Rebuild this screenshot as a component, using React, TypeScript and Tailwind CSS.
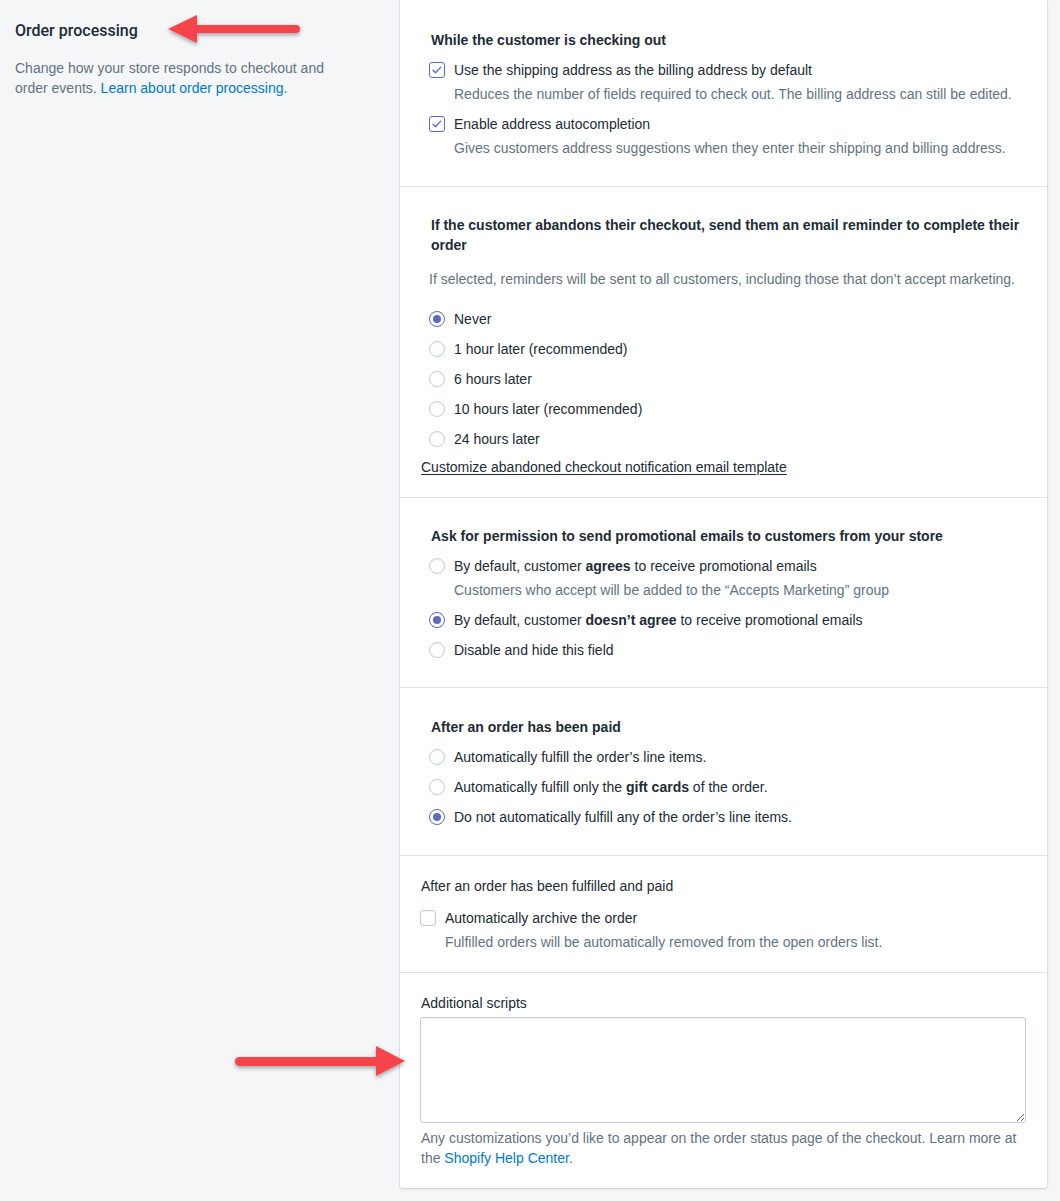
import React from 'react';

const font = { fontFamily: '"Liberation Sans", Arial, sans-serif' };

function Checkbox({ checked }: { checked?: boolean }) {
  return (
    <span
      className={`flex h-4 w-4 shrink-0 items-center justify-center rounded-[3px] border bg-white ${
        checked ? 'border-[#5c6ac4]' : 'border-[#c4cdd5] shadow-[inset_0_1px_2px_rgba(0,0,0,0.06)]'
      }`}
    >
      {checked && (
        <svg viewBox="0 0 16 16" className="h-3.5 w-3.5">
          <path d="M3.5 8.2l2.8 2.9 6-6.4" stroke="#5c6ac4" strokeWidth="1.5" fill="none" strokeLinecap="round" strokeLinejoin="round" />
        </svg>
      )}
    </span>
  );
}

function Radio({ checked }: { checked?: boolean }) {
  return (
    <span
      className={`flex h-4 w-4 shrink-0 items-center justify-center rounded-full border bg-white ${
        checked ? 'border-[#5c6ac4]' : 'border-[#c4cdd5] shadow-[inset_0_1px_2px_rgba(0,0,0,0.06)]'
      }`}
    >
      {checked && <span className="h-2 w-2 rounded-full bg-[#5c6ac4]" />}
    </span>
  );
}

interface OptionProps {
  control: React.ReactNode;
  children: React.ReactNode;
  help?: string;
}

const Option: React.FC<OptionProps> = ({ control, children, help }) => {
  return (
    <div>
      <label className="flex h-5 items-center gap-[9px] text-[#212b36]">
        {control}
        <span>{children}</span>
      </label>
      {help && <p className="mt-1 pl-[25px] leading-5 text-[#637381]">{help}</p>}
    </div>
  );
};

function Arrow({ left }: { left?: boolean }) {
  return (
    <svg width="180" height="40" viewBox="0 0 180 40">
      <defs>
        <filter id={left ? 'shl' : 'shr'} x="-10%" y="-40%" width="120%" height="180%">
          <feDropShadow dx="0" dy="2" stdDeviation="2" floodColor="#000" floodOpacity="0.35" />
        </filter>
      </defs>
      {left ? (
        <g filter="url(#shl)" fill="#f5444b">
          <path d="M4 18 L33 4 L33 32 Z" />
          <rect x="30" y="14" width="106" height="8" rx="4" />
        </g>
      ) : (
        <g filter="url(#shr)" fill="#f5444b">
          <rect x="4" y="14" width="148" height="9" rx="4.5" />
          <path d="M174 18 L145 3 L145 33 Z" />
        </g>
      )}
    </svg>
  );
}

export default function App() {
  const reminders = [
    { label: '1 hour later (recommended)' },
    { label: '6 hours later' },
    { label: '10 hours later (recommended)' },
    { label: '24 hours later' },
  ];

  return (
    <div className="relative min-h-[1201px] w-[1060px] bg-[#f4f6f8] text-[14px] leading-5" style={font}>
      <div className="flex">
        <div className="w-[400px] shrink-0 pl-[15px] pt-[21px]">
          <h2 className="font-['Roboto',sans-serif] text-[16px] font-medium leading-5 text-[#212b36]">Order processing</h2>
          <p className="mt-[17px] w-[318px] text-[#637381]">
            Change how your store responds to checkout and order events.{' '}
            <a className="text-[#007ace]">Learn about order processing</a>.
          </p>
        </div>

        <div className="mb-[14px] w-[647px] rounded-b-[3px] bg-white shadow-[0_0_0_1px_rgba(63,63,68,0.07),0_1px_3px_0_rgba(63,63,68,0.15)]">
          {/* checking out */}
          <section className="border-b border-[#dfe3e8] pb-[28px] pl-[29px] pr-5 pt-[30px]">
            <h3 className="pl-[2px] font-bold text-[#212b36]">While the customer is checking out</h3>
            <div className="mt-[10px] space-y-[10px]">
              <Option
                control={<Checkbox checked />}
                help="Reduces the number of fields required to check out. The billing address can still be edited."
              >
                Use the shipping address as the billing address by default
              </Option>
              <Option
                control={<Checkbox checked />}
                help="Gives customers address suggestions when they enter their shipping and billing address."
              >
                Enable address autocompletion
              </Option>
            </div>
          </section>

          {/* abandoned checkout */}
          <section className="border-b border-[#dfe3e8] pb-5 pl-[29px] pr-5 pt-[28px]">
            <h3 className="pl-[2px] font-bold text-[#212b36]">
              If the customer abandons their checkout, send them an email reminder to complete their order
            </h3>
            <p className="mt-[14px] text-[#637381]">
              If selected, reminders will be sent to all customers, including those that don’t accept marketing.
            </p>
            <div className="mt-5 space-y-[10px]">
              <Option control={<Radio checked />}>Never</Option>
              {reminders.map((r, i) => (
                <Option key={i} control={<Radio />}>
                  {r.label}
                </Option>
              ))}
            </div>
            <a className="-ml-2 mt-2 block text-[#212b36] underline underline-offset-2">
              Customize abandoned checkout notification email template
            </a>
          </section>

          {/* marketing */}
          <section className="border-b border-[#dfe3e8] pb-[27px] pl-[29px] pr-5 pt-[28px]">
            <h3 className="pl-[2px] font-bold text-[#212b36]">
              Ask for permission to send promotional emails to customers from your store
            </h3>
            <div className="mt-[10px] space-y-[10px]">
              <Option
                control={<Radio />}
                help="Customers who accept will be added to the “Accepts Marketing” group"
              >
                By default, customer <b className="font-bold">agrees</b> to receive promotional emails
              </Option>
              <Option control={<Radio checked />}>
                By default, customer <b className="font-bold">doesn’t agree</b> to receive promotional emails
              </Option>
              <Option control={<Radio />}>Disable and hide this field</Option>
            </div>
          </section>

          {/* paid */}
          <section className="border-b border-[#dfe3e8] pb-[28px] pl-[29px] pr-5 pt-[29px]">
            <h3 className="pl-[2px] font-bold text-[#212b36]">After an order has been paid</h3>
            <div className="mt-[10px] space-y-[10px]">
              <Option control={<Radio />}>Automatically fulfill the order’s line items.</Option>
              <Option control={<Radio />}>
                Automatically fulfill only the <b className="font-bold">gift cards</b> of the order.
              </Option>
              <Option control={<Radio checked />}>Do not automatically fulfill any of the order’s line items.</Option>
            </div>
          </section>

          {/* fulfilled */}
          <section className="border-b border-[#dfe3e8] px-5 pb-5 pt-5">
            <p className="pl-px text-[#212b36]">After an order has been fulfilled and paid</p>
            <div className="mt-[12px]">
              <Option
                control={<Checkbox />}
                help="Fulfilled orders will be automatically removed from the open orders list."
              >
                Automatically archive the order
              </Option>
            </div>
          </section>

          {/* scripts */}
          <section className="px-5 pb-5 pt-5">
            <label className="block pl-px text-[#212b36]">Additional scripts</label>
            <textarea className="mt-1 block h-[106px] w-[606px] rounded-[3px] border border-[#c4cdd5] bg-white shadow-[inset_0_1px_0_0_rgba(99,115,129,0.05)]" />
            <p className="mt-[5px] pl-px text-[#637381]">
              Any customizations you’d like to appear on the order status page of the checkout. Learn more at the{' '}
              <a className="text-[#007ace]">Shopify Help Center</a>.
            </p>
          </section>
        </div>
      </div>

      {/* annotation arrows */}
      <div className="absolute left-[164px] top-[11px]">
        <Arrow left />
      </div>
      <div className="absolute left-[231px] top-[1043px]">
        <Arrow />
      </div>
    </div>
  );
}
